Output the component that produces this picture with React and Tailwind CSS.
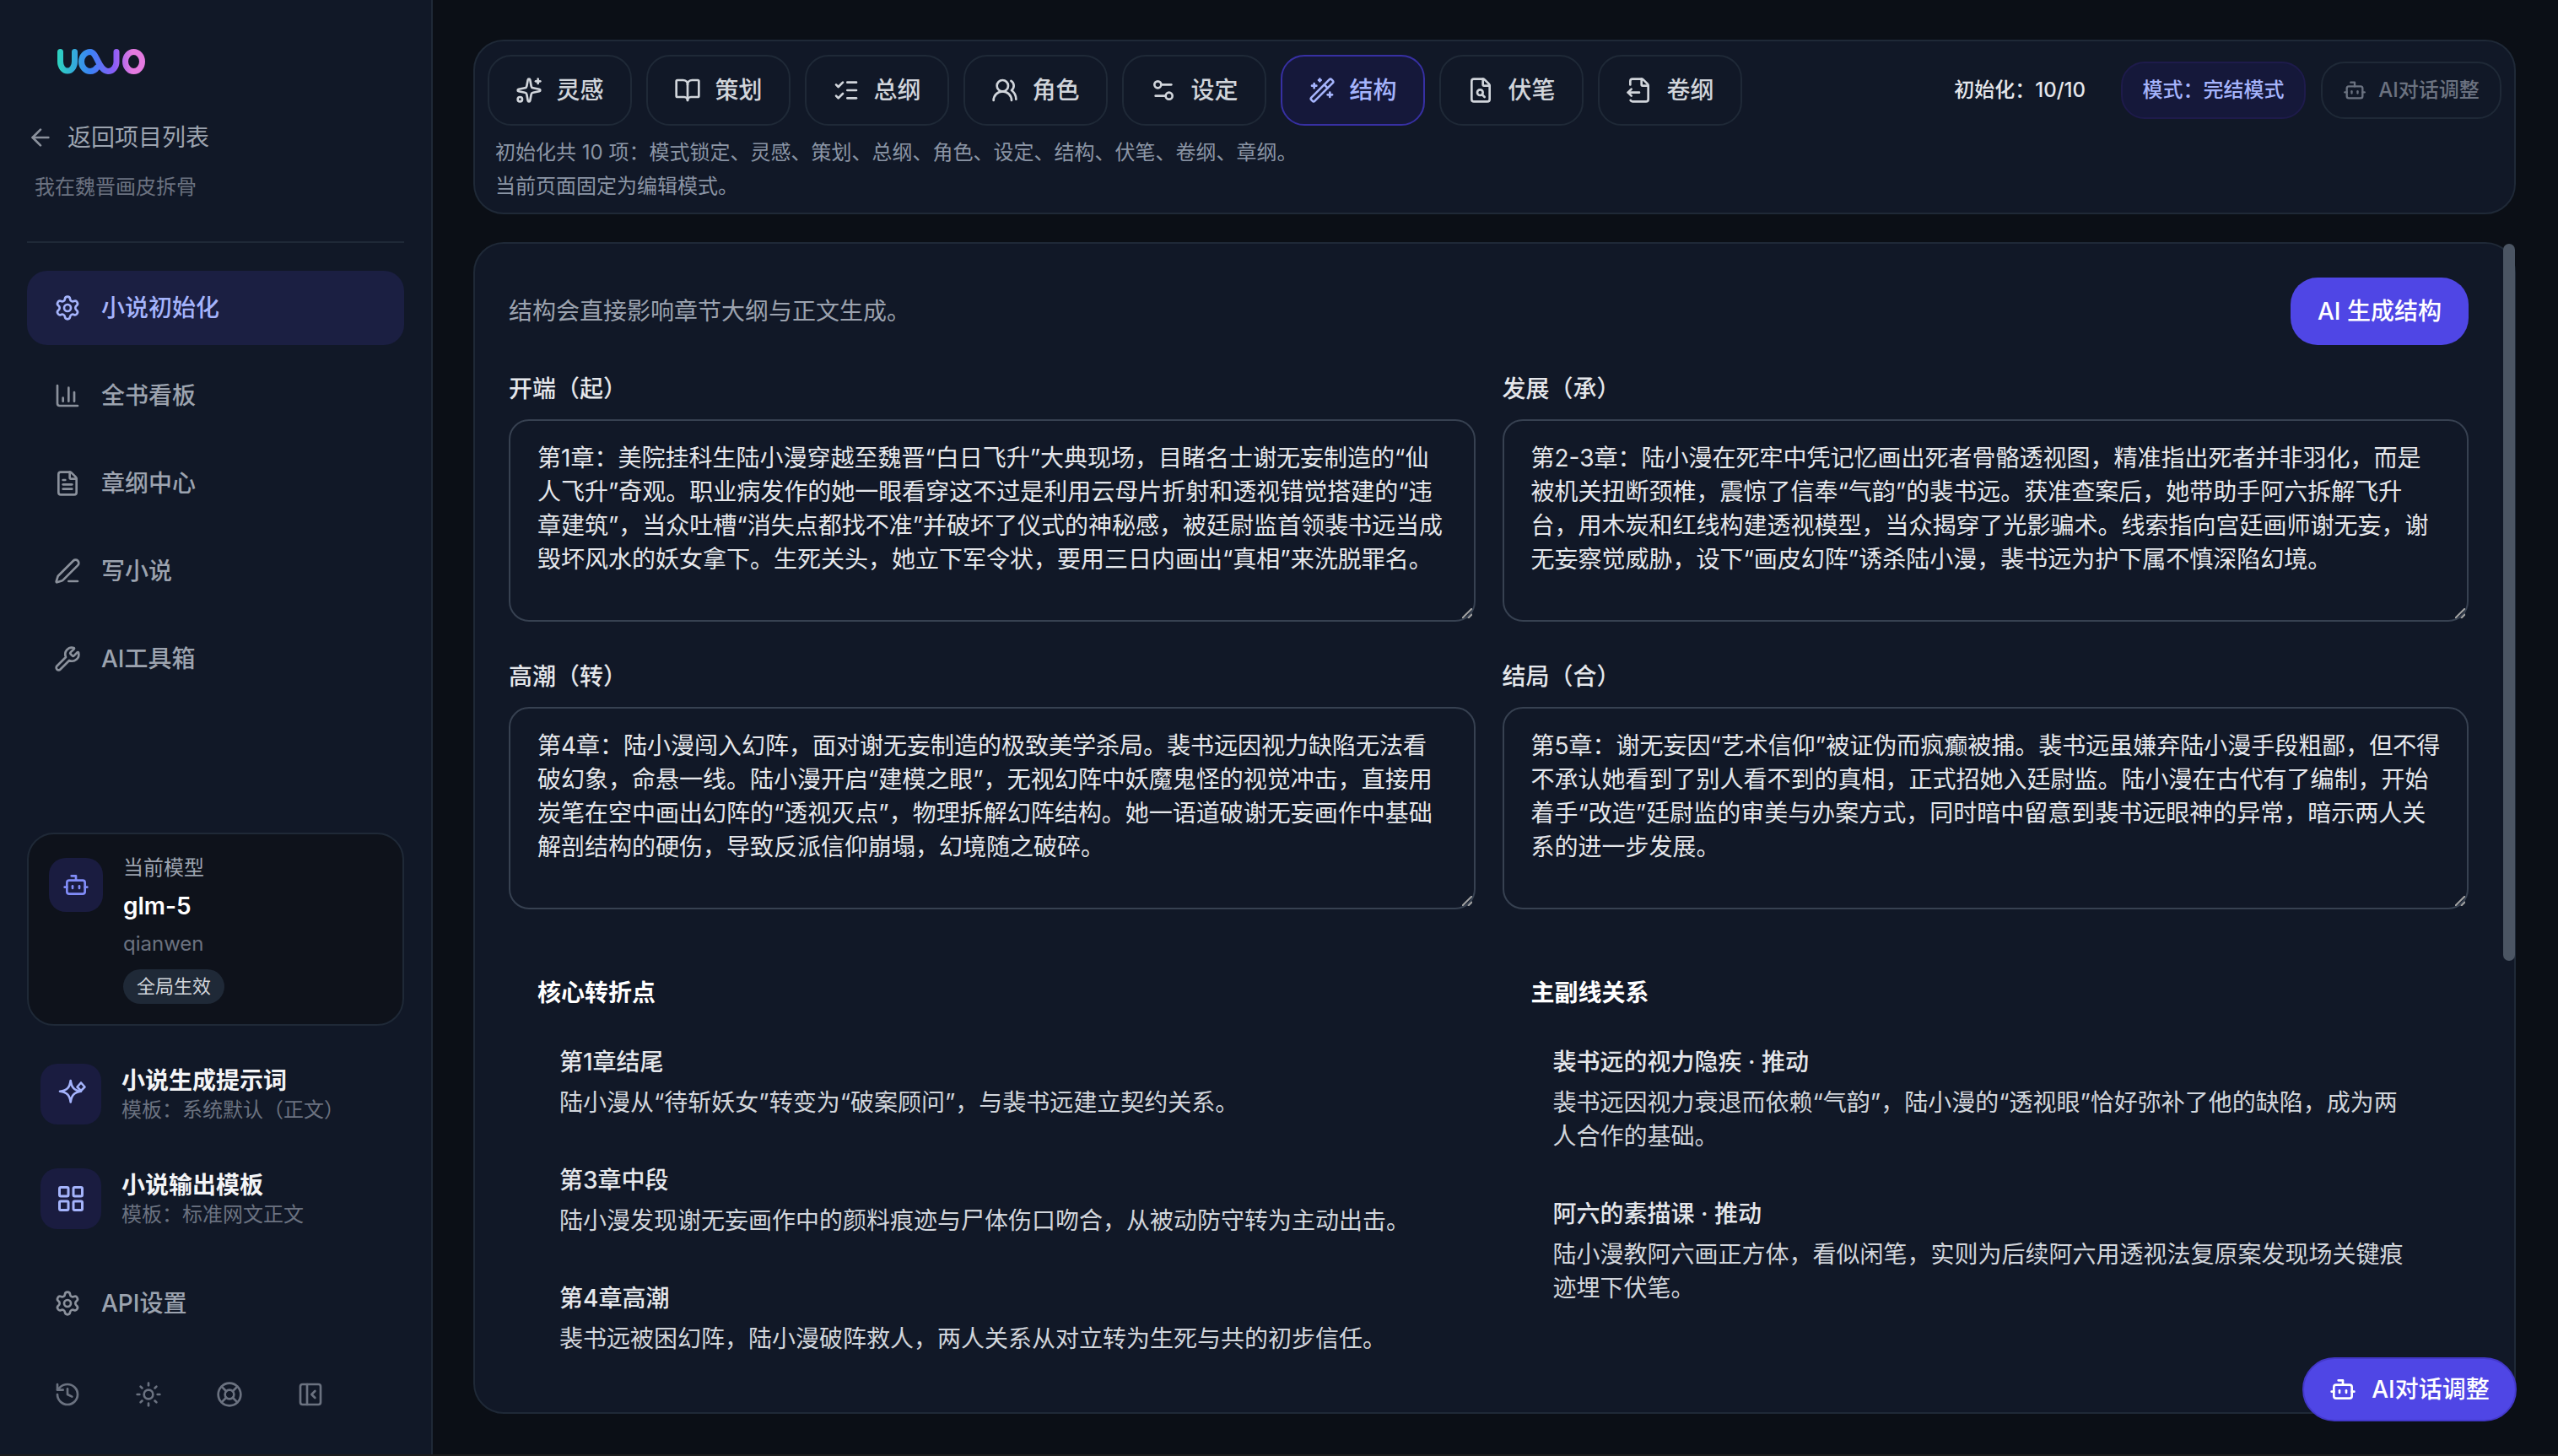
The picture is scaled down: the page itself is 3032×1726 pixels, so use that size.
import React from 'react';
import {
  ArrowLeft, Settings, ChartColumn, FileText, PenLine, Wrench, Bot, LayoutGrid, History, Sun, LifeBuoy,
  PanelLeftClose, Sparkles, BookOpen, ListChecks, UsersRound, Settings2, WandSparkles, FileOutput,
} from 'lucide-react';

function FileSearchInner({ size = 32, strokeWidth = 2 }) {
  return (
    <svg width={size} height={size} viewBox="0 0 24 24" fill="none" stroke="currentColor" strokeWidth={strokeWidth} strokeLinecap="round" strokeLinejoin="round">
      <path d="M6 22a2 2 0 0 1-2-2V4a2 2 0 0 1 2-2h8a2.400 2.400 0 0 1 1.704.706l3.588 3.588A2.400 2.400 0 0 1 20 8v12a2 2 0 0 1-2 2z" />
      <path d="M14 2v5a1 1 0 0 0 1 1h5" />
      <circle cx="11.500" cy="14" r="2.500" />
      <path d="M13.400 15.900 15.500 18" />
    </svg>
  );
}

const tabs = [
  ['灵感', Sparkles],
  ['策划', BookOpen],
  ['总纲', ListChecks],
  ['角色', UsersRound],
  ['设定', Settings2],
  ['结构', WandSparkles, true],
  ['伏笔', FileSearchInner],
  ['卷纲', FileOutput],
];

const nav = [
  ['全书看板', ChartColumn],
  ['章纲中心', FileText],
  ['写小说', PenLine],
  ['AI工具箱', Wrench],
];

const fields = [
  ['开端\uFF08起\uFF09', '第1章\uFF1A美院挂科生陆小漫穿越至魏晋“白日飞升”大典现场\uFF0C目睹名士谢无妄制造的“仙人飞升”奇观。职业病发作的她一眼看穿这不过是利用云母片折射和透视错觉搭建的“违章建筑”\uFF0C当众吐槽“消失点都找不准”并破坏了仪式的神秘感\uFF0C被廷尉监首领裴书远当成毁坏风水的妖女拿下。生死关头\uFF0C她立下军令状\uFF0C要用三日内画出“真相”来洗脱罪名。'],
  ['发展\uFF08承\uFF09', '第2-3章\uFF1A陆小漫在死牢中凭记忆画出死者骨骼透视图\uFF0C精准指出死者并非羽化\uFF0C而是被机关扭断颈椎\uFF0C震惊了信奉“气韵”的裴书远。获准查案后\uFF0C她带助手阿六拆解飞升台\uFF0C用木炭和红线构建透视模型\uFF0C当众揭穿了光影骗术。线索指向宫廷画师谢无妄\uFF0C谢无妄察觉威胁\uFF0C设下“画皮幻阵”诱杀陆小漫\uFF0C裴书远为护下属不慎深陷幻境。'],
  ['高潮\uFF08转\uFF09', '第4章\uFF1A陆小漫闯入幻阵\uFF0C面对谢无妄制造的极致美学杀局。裴书远因视力缺陷无法看破幻象\uFF0C命悬一线。陆小漫开启“建模之眼”\uFF0C无视幻阵中妖魔鬼怪的视觉冲击\uFF0C直接用炭笔在空中画出幻阵的“透视灭点”\uFF0C物理拆解幻阵结构。她一语道破谢无妄画作中基础解剖结构的硬伤\uFF0C导致反派信仰崩塌\uFF0C幻境随之破碎。'],
  ['结局\uFF08合\uFF09', '第5章\uFF1A谢无妄因“艺术信仰”被证伪而疯癫被捕。裴书远虽嫌弃陆小漫手段粗鄙\uFF0C但不得不承认她看到了别人看不到的真相\uFF0C正式招她入廷尉监。陆小漫在古代有了编制\uFF0C开始着手“改造”廷尉监的审美与办案方式\uFF0C同时暗中留意到裴书远眼神的异常\uFF0C暗示两人关系的进一步发展。'],
];

const panels = [
  ['核心转折点', [
    ['第1章结尾', '陆小漫从“待斩妖女”转变为“破案顾问”\uFF0C与裴书远建立契约关系。'],
    ['第3章中段', '陆小漫发现谢无妄画作中的颜料痕迹与尸体伤口吻合\uFF0C从被动防守转为主动出击。'],
    ['第4章高潮', '裴书远被困幻阵\uFF0C陆小漫破阵救人\uFF0C两人关系从对立转为生死与共的初步信任。'],
  ]],
  ['主副线关系', [
    ['裴书远的视力隐疾 · 推动', '裴书远因视力衰退而依赖“气韵”\uFF0C陆小漫的“透视眼”恰好弥补了他的缺陷\uFF0C成为两人合作的基础。'],
    ['阿六的素描课 · 推动', '陆小漫教阿六画正方体\uFF0C看似闲笔\uFF0C实则为后续阿六用透视法复原案发现场关键痕迹埋下伏笔。'],
  ]],
];

function Logo() {
  return (
    <svg width="104" height="30" viewBox="0 0 104 30" fill="none" strokeWidth="7" strokeLinecap="round">
      <defs>
        <linearGradient id="logoGrad" gradientUnits="userSpaceOnUse" x1="0" y1="0" x2="104" y2="0">
          <stop offset="0" stopColor="#2dd4bf" />
          <stop offset="0.38" stopColor="#3b82f6" />
          <stop offset="0.65" stopColor="#8b5cf6" />
          <stop offset="0.85" stopColor="#e47ae0" />
          <stop offset="1" stopColor="#e47ae0" />
        </linearGradient>
      </defs>
      <g stroke="url(#logoGrad)">
        <path d="M3.500 3.500V15a8.500 11 0 0 0 17 0V3.500" />
        <path d="M47 22C45 25 42 26.500 39 26.500A10.500 11.500 0 0 1 39 3.500C47 3.500 49 26.500 60 26.500A10 11 0 0 0 70 15V3.500" />
        <ellipse cx="90.500" cy="15" rx="10" ry="11.500" />
      </g>
    </svg>
  );
}

function StarIcon() {
  return (
    <svg width="40" height="40" viewBox="0 0 40 40" fill="none" stroke="#a5b4fc" strokeWidth="2.600" strokeLinejoin="round">
      <path d="M19.700 4C20.800 12 23.500 15.500 32 16.700C23.500 18 20.800 21.500 19.700 29.500C18.600 21.500 16 18 7 16.700C16 15.500 18.600 12 19.700 4Z" />
      <path d="M32 6.500 36.500 11.500 32 16 27.500 11.500Z" />
    </svg>
  );
}

export default function App() {
  return (
    <div className="relative w-[3032px] h-[1726px] overflow-hidden bg-[#0b0f16] font-['Inter','Noto_Sans_CJK_SC',sans-serif]">
      <div className="flex h-[1724px]">
        <aside className="w-[513px] shrink-0 h-full flex flex-col bg-[#111827] border-r-2 border-[#1f2937] px-8">
          <div className="mt-[58px] ml-[36px] h-[30px]"><Logo /></div>
          <div className="mt-[55px] h-10 flex items-center gap-4 text-[#9ca3af] text-[28px]">
            <ArrowLeft size={32} strokeWidth={2} color="#8b919c" />
            <span>返回项目列表</span>
          </div>
          <div className="mt-[23px] h-8 pl-[9px] text-[24px] leading-8 text-[#6b7280]">我在魏晋画皮拆骨</div>
          <div className="mt-[48px] h-[2px] bg-[#1f2937]" />
          <nav className="mt-[33px] flex flex-col gap-4">
            <div className="h-[88px] flex items-center gap-6 pl-8 rounded-3xl bg-[#1b1f42] text-[#a5b4fc] text-[28px] font-medium">
              <Settings size={32} strokeWidth={2} />
              <span>小说初始化</span>
            </div>
            {nav.map(([label, Icon]) => (
              <div key={label} className="h-[88px] flex items-center gap-6 pl-8 rounded-3xl text-[#9ca3af] text-[28px] font-medium">
                <Icon size={32} strokeWidth={2} color="#8b919c" />
                <span>{label}</span>
              </div>
            ))}
          </nav>

          <div className="mt-auto h-[229px] rounded-[32px] border-2 border-[#1f2937] bg-[#0e121b] p-6 flex gap-6">
            <div className="mt-1 w-16 h-16 rounded-[20px] bg-[#1a1c40] flex items-center justify-center">
              <Bot size={32} strokeWidth={2} color="#818cf8" />
            </div>
            <div className="flex flex-col items-start">
              <div className="h-8 text-[24px] leading-8 text-[#9ca3af]">当前模型</div>
              <div className="mt-[5px] h-12 text-[28px] leading-[48px] font-semibold text-white">glm-5</div>
              <div className="mt-[3px] h-9 text-[24px] leading-9 text-[#6b7280]">qianwen</div>
              <div className="mt-3 h-[41px] px-4 rounded-full bg-[#1f2937] text-[22px] leading-[41px] text-[#d1d5db]">全局生效</div>
            </div>
          </div>

          <div className="mt-[45px] ml-4 flex items-center gap-6 h-[72px]">
            <div className="w-[72px] h-[72px] rounded-[20px] bg-[#1a1c40] flex items-center justify-center"><StarIcon /></div>
            <div className="flex flex-col">
              <div className="text-[28px] leading-[38px] font-bold text-[#f3f4f6]">小说生成提示词</div>
              <div className="text-[24px] leading-8 text-[#6b7280]">{'模板\uFF1A系统默认\uFF08正文\uFF09'}</div>
            </div>
          </div>
          <div className="mt-[52px] ml-4 flex items-center gap-6 h-[72px]">
            <div className="w-[72px] h-[72px] rounded-[20px] bg-[#1a1c40] flex items-center justify-center">
              <LayoutGrid size={36} strokeWidth={2} color="#a5b4fc" />
            </div>
            <div className="flex flex-col">
              <div className="text-[28px] leading-[38px] font-bold text-[#f3f4f6]">小说输出模板</div>
              <div className="text-[24px] leading-8 text-[#6b7280]">{'模板\uFF1A标准网文正文'}</div>
            </div>
          </div>

          <div className="mt-[44px] h-[88px] flex items-center gap-6 pl-8 text-[#9ca3af] text-[28px] font-medium">
            <Settings size={32} strokeWidth={2} color="#8b919c" />
            <span>API设置</span>
          </div>
          <div className="mt-[48px] mb-[55px] h-8 pl-8 flex items-center gap-16 text-[#6b7280]">
            <History size={32} strokeWidth={2} />
            <Sun size={32} strokeWidth={2} />
            <LifeBuoy size={32} strokeWidth={2} />
            <PanelLeftClose size={32} strokeWidth={2} />
          </div>
        </aside>

        <main className="flex-1 min-w-0 flex flex-col pl-12 pr-[50px] pt-[47px] pb-12 gap-[33px]">
          <section className="h-[207px] shrink-0 rounded-[36px] border-2 border-[#1f2937] bg-[#111827] px-[15px] pt-4">
            <div className="flex items-center h-[84px]">
              <div className="flex gap-[17px]">
                {tabs.map(([label, Icon, active]) => (
                  <div
                    key={label}
                    className={active
                      ? 'w-[171px] h-[84px] flex items-center justify-center gap-4 rounded-[28px] border-2 border-[#3730a3] bg-[#15183a] text-[#a5b4fc] text-[28px] font-medium'
                      : 'w-[171px] h-[84px] flex items-center justify-center gap-4 rounded-[28px] border-2 border-[#1f2937] text-[#d1d5db] text-[28px] font-medium'}
                  >
                    <Icon size={32} strokeWidth={2} />
                    <span>{label}</span>
                  </div>
                ))}
              </div>
              <div className="ml-auto flex items-center">
                <span className="text-[24px] font-medium text-[#e5e7eb]">{'初始化\uFF1A10/10'}</span>
                <div className="ml-[42px] h-[68px] w-[219px] flex items-center justify-center rounded-[28px] border-2 border-[#1e1b4b] bg-[#15183a] text-[24px] font-medium text-[#a5b4fc]">{'模式\uFF1A完结模式'}</div>
                <div className="ml-[18px] h-[68px] w-[214px] flex items-center justify-center gap-[14px] rounded-[28px] border-2 border-[#1f2937] text-[24px] font-medium text-[#6b7280]">
                  <Bot size={28} strokeWidth={2} />
                  <span>AI对话调整</span>
                </div>
              </div>
            </div>
            <div className="mt-3 pl-[9px] text-[24px] leading-10 text-[#8b95a5]">
              <div>{'初始化共 10 项\uFF1A模式锁定、灵感、策划、总纲、角色、设定、结构、伏笔、卷纲、章纲。'}</div>
              <div>当前页面固定为编辑模式。</div>
            </div>
          </section>

          <div className="relative flex-1 min-h-0">
            <section className="h-full overflow-hidden rounded-[36px] border-2 border-[#1f2937] bg-[#111827] pl-10 pr-[54px] pt-10">
              <div className="flex items-center justify-between h-20 mb-8">
                <p className="text-[28px] text-[#9ca3af]">结构会直接影响章节大纲与正文生成。</p>
                <button className="w-[211px] h-20 rounded-[32px] bg-[#4f46e5] text-white text-[28px] font-medium">AI 生成结构</button>
              </div>
              <div className="grid grid-cols-2 gap-x-8 gap-y-[45px]">
                {fields.map(([label, text]) => (
                  <div key={label}>
                    <div className="h-10 mb-4 text-[28px] leading-10 font-medium text-[#e5e7eb]">{label}</div>
                    <div className="relative">
                      <textarea
                        readOnly
                        defaultValue={text}
                        className="block w-full h-[240px] rounded-3xl border-2 border-[#374151] bg-transparent pl-8 pr-[30px] py-6 text-[28px] leading-10 text-[#e5e7eb] outline-none resize-none"
                      />
                      <svg className="absolute right-[4px] bottom-[4px]" width="12" height="12" viewBox="0 0 12 12" stroke="#a3a3a3" strokeWidth="2" fill="none">
                        <path d="M0 12 12 0" />
                        <path d="M7 12 12 7" />
                      </svg>
                    </div>
                  </div>
                ))}
              </div>
              <div className="mt-[43px] grid grid-cols-2 gap-x-8">
                {panels.map(([title, items]) => (
                  <div key={title} className="px-[34px] pt-9">
                    <h3 className="h-10 text-[28px] leading-10 font-bold text-white">{title}</h3>
                    <div className="mt-[42px] px-[26px] flex flex-col gap-[52px]">
                      {items.map(([t, d]) => (
                        <div key={t}>
                          <div className="h-10 text-[28px] leading-10 font-medium text-[#e5e7eb]">{t}</div>
                          <div className="mt-2 text-[28px] leading-10 text-[#d1d5db]">{d}</div>
                        </div>
                      ))}
                    </div>
                  </div>
                ))}
              </div>
            </section>
            <div className="absolute right-[1px] top-[2px] w-[14px] h-[850px] rounded-full bg-[#4b5563]" />
          </div>
        </main>
      </div>
      <div className="h-[2px] bg-[#1c1c1c]" />

      <button className="absolute left-[2729px] top-[1609px] w-[254px] h-[76px] flex items-center justify-center gap-[18px] rounded-full bg-[#4f46e5] border-2 border-[#4338ca] text-white text-[28px] font-medium">
        <Bot size={32} strokeWidth={2} />
        <span>AI对话调整</span>
      </button>
    </div>
  );
}
